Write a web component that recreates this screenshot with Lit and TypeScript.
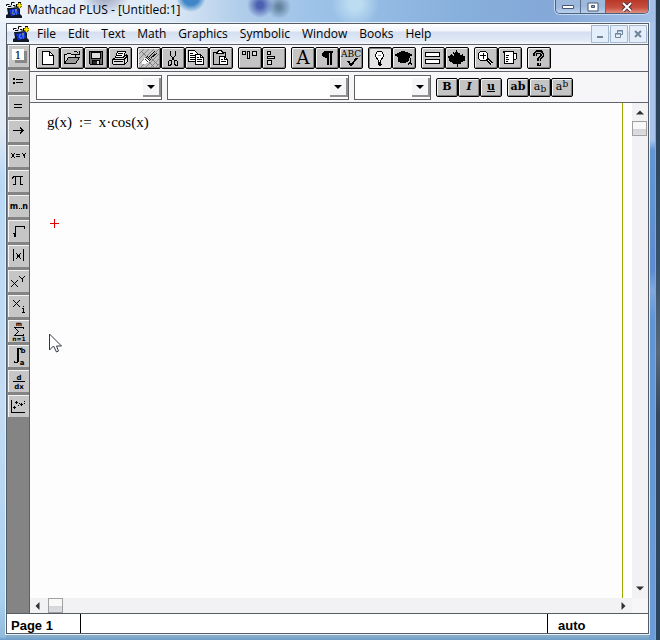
import { LitElement, html, css, svg, TemplateResult } from "lit";
import { customElement } from "lit/decorators.js";

type Tool = { label: string; icon: TemplateResult; pressed?: boolean };

const logo = html`<svg class="logo" viewBox="0 0 16 16" width="16" height="16" aria-hidden="true">
  <path d="M1 6h3l8-1 2 2v5l2 2v2H0v-3l2-1z" fill="#101828" />
  <path d="M3 8l9-2 1 6-8 2z" fill="#1230d8" />
  <path d="M6 9h2M9 10h2M7 12h2M10 12h1" stroke="#6aa0ff" />
  <path d="M9 8h2M6 11h1" stroke="#e6d200" />
  <path d="M.5 4V2.500h3M2 4.500h3v-1M5.500 3V.5h3M7 3.500h2v2" stroke="#000" fill="none" />
  <path d="M10 3.500h6M13.500 0v6" stroke="#000" stroke-width="3" />
  <path d="M11 3.500h5M13.500 1v5" stroke="#ffe800" stroke-width="2" />
</svg>`;

const toolGroups: Tool[][] = [
  [
    { label: "New", icon: svg`<path d="M5.500 3.500h7l4 4v9h-11z" fill="#fff"/><path d="M12.500 3.500v4h4"/>` },
    {
      label: "Open",
      icon: svg`<path d="M3.500 15.500v-9h2l1-1h3l1 1h4v3" fill="#d8d8d8"/><path d="M3.500 15.500l4-6h11l-4 6z" fill="#999"/><path d="M12.500 4.500l1-1h2l2 2M18.500 3v3.500H15"/>`,
    },
    {
      label: "Save",
      icon: svg`<path d="M4.500 3.500h13v13h-12l-1-1z" fill="#666"/><path d="M6.500 4h9v6h-9z" fill="#ddd"/><path d="M7.500 16v-4h7v4" fill="#222"/><path d="M12.500 13v3" stroke="#ddd" stroke-width="2"/>`,
    },
    {
      label: "Print",
      icon: svg`<path d="M6.500 9.500l2-6h8l-2 6z" fill="#fff"/><path d="M9 5.500h5M8 7.500h5"/><path d="M3.500 11.500l3-2h8l3-3 1 2v5l-3 3h-11l-1-1z" fill="#ddd"/><path d="M4 11.500h11v4M5 13.500h9M15 11.500l3-3" /><path d="M12 12.500h2" stroke="#fff"/>`,
    },
  ],
  [
    {
      label: "Clear",
      icon: svg`<path d="M1 6l5-5M1 11L11 1M1 16L16 1M3 19L21 1M8 19L21 6M13 19l8-8M18 19l3-3" stroke="#888"/><path d="M3 3l5 5M13 10l7 7M11 14l5 5" stroke="#777"/><path d="M11 9l6-6M13 10l6-5" stroke="#111"/><path d="M9 8l4 4M8 9l4 4" stroke="#111"/><path d="M4 15l3-5 4 3-4 3z" fill="#fff" stroke="#fff"/><path d="M7 11l3 3" stroke="#333"/>`,
    },
    {
      label: "Cut",
      icon: svg`<path d="M8.500 3v4l4 6M13.500 3v4l-4 6M10.500 9.500h1"/><path d="M6.500 13.500l1-1h2v3l-1 2h-2zM12.500 12.500h2l1 1v4h-2l-1-2z"/>`,
    },
    {
      label: "Copy",
      icon: svg`<path d="M2.500 2.500h6l3 3v8h-9z" fill="#fff"/><path d="M4 5.500h3M4 7.500h5M4 9.500h5M4 11.500h5"/><path d="M9.500 6.500h5l3 3v7h-8z" fill="#fff"/><path d="M14.500 6.500v3h3M11 9.500h2M11 11.500h5M11 13.500h5"/>`,
    },
    {
      label: "Paste",
      icon: svg`<path d="M3.500 4.500h12v12h-12z" fill="#bbb"/><path d="M6.500 5.500v-1l2-1v-1h3v1l2 1v1z" fill="#fff"/><path d="M9.500 8.500h5l3 3v5h-8z" fill="#fff"/><path d="M14.500 8.500v3h3M11 11.500h2M11 13.500h5"/>`,
    },
  ],
  [
    { label: "Align across", icon: svg`<path d="M3.500 3.500h3v3h-3zM8.500 3.500h2v7h-2zM13.500 3.500h4v4h-4z" fill="#ddd"/>` },
    { label: "Align down", icon: svg`<path d="M4.500 3.500h3v3h-3zM4.500 8.500h7v2h-7zM4.500 12.500h4v4h-4z" fill="#ddd"/>` },
  ],
  [
    { label: "Text region", icon: svg`<text class="serif" x="11" y="16" font-size="18">A</text>` },
    { label: "Paragraph", icon: svg`<path d="M8 3h9v1.500H8zM11 3h1.500v14H11zM14 3h1.500v14H14z" fill="#000" stroke="none"/><path d="M11 3c-7 0-7 7 0 7z" fill="#000" stroke="none"/>` },
    { label: "Check spelling", icon: svg`<text class="serif" x="11" y="9" font-size="9">ABC</text><path d="M8 13l3 4 6-7" stroke-width="2"/>` },
  ],
  [
    {
      label: "Tip",
      pressed: true,
      icon: svg`<path d="M9.500 14.500v-2l-3-4v-2l2-3h4l2 3v2l-3 4v2z" fill="#fff"/><path d="M9 15.500h3M10 17.500h2M9 16.500h4"/><path d="M9 7l1 1 1-1 1 1" stroke="#999"/>`,
    },
    {
      label: "Tutorial",
      icon: svg`<path d="M2 7l8-4 9 4-8 4z" fill="#000"/><path d="M5 9v4l5 2 5-2V9l-5 2z" fill="#000"/><path d="M12 8l5 2v6M16.500 14l-1 3M17.500 14l1 3"/>`,
    },
  ],
  [
    { label: "Formula", icon: svg`<path d="M3.500 4.500h14v4h-14zM3.500 11.500h14v4h-14z" fill="#fff"/>` },
    {
      label: "Evaluate",
      icon: svg`<path d="M10.500 2l2 3 2-1-1 4 3-2 1 2h2l-1 3 1 1-5 3 1 1-4 0v3h-1v-3H6l1-1-5-3 1-1-1-3h2l1-2 3 2-1-4 2 1z" fill="#000" stroke="none"/>`,
    },
  ],
  [
    {
      label: "Zoom",
      icon: svg`<circle cx="8" cy="8" r="5" fill="#fff"/><path d="M5 7.500h6M8.500 5v6"/><path d="M12 11l5 5" stroke-width="4"/><path d="M13 12l4 4" stroke="#fff"/>`,
    },
    {
      label: "Units",
      icon: svg`<path d="M4.500 3.500h10v2h3v5l-3 2v3h-9v-10z" fill="#fff"/><path d="M14.500 5v8M7 7.500h3M7 9.500h2M7 11.500h3M7 13.500h2"/>`,
    },
  ],
  [
    {
      label: "Help",
      icon: svg`<path d="M7 8V6l2-2h4l1 2v2l-3 3v2M11 14.500v3" stroke-width="4"/><path d="M7 8V6l2-2h3l2 2v2l-3 3v2M11 15v2" stroke="#aaa"/>`,
    },
  ],
];

const palette: Tool[] = [
  { label: "Arithmetic", icon: svg`<path d="M7 6h12v12H7z" fill="#888" stroke="none"/><path d="M4 4h12v11H4z" fill="#fff" stroke="none"/><text class="serif" x="10" y="14" font-size="11">1</text>` },
  { label: "Define", icon: svg`<path d="M5 9h2M5 13h2" stroke-width="2"/><path d="M8 9.500h7M8 12.500h7"/>` },
  { label: "Equals", icon: svg`<path d="M6 9.500h8M6 12.500h8"/>` },
  { label: "Arrow", icon: svg`<path d="M5 10.500h10M12 7.500l3 3-3 3"/>` },
  { label: "Boolean", icon: svg`<path d="M3 8l4 5M7 8l-4 5M8 9.500h4M8 11.500h4M14 8l2 2.500L18 8M16 10v3"/>` },
  { label: "Greek", icon: svg`<path d="M4 8.500l2-2h9M7.500 7v7l-2 1M12.500 7v7l2 1"/>` },
  { label: "Range", icon: svg`<text class="tiny" x="6" y="14" font-size="8">m</text><path d="M11 13.500h1M13 13.500h1"/><text class="tiny" x="17" y="14" font-size="8">n</text>` },
  { label: "Square root", icon: svg`<path d="M5 13.500h2M7 17V6.500h9v2M6.500 13v4"/>` },
  { label: "Absolute", icon: svg`<path d="M5.500 4v12M15.500 4v12M8 8l5 6M13 8l-5 6"/>` },
  { label: "Power", icon: svg`<path d="M3 10l7 7M10 10l-7 7M11 6l3 3 3-3M14 8v4"/>` },
  { label: "Subscript", icon: svg`<path d="M5 5l7 7M12 5l-7 7M15.500 11v1M14 13.500h1.500v4M14 17.500h3"/>` },
  { label: "Sum", icon: svg`<text class="tiny" x="11" y="6" font-size="6">m</text><path d="M15.500 9V7.500H6.500l4 4-4 4h9V14M7 8l4 4M7 15l4-4"/><text class="tiny" x="11" y="21" font-size="6">n=1</text>` },
  { label: "Integral", icon: svg`<path d="M12 5V3.500H9.500v14H6V16M10.500 4v13"/><text class="tiny" x="15" y="8" font-size="7">b</text><text class="tiny" x="14" y="20" font-size="7">a</text>` },
  { label: "Derivative", icon: svg`<text class="tiny" x="11" y="10" font-size="7">d</text><path d="M5 11.500h12"/><text class="tiny" x="11" y="19" font-size="7">dx</text>` },
  { label: "Graph", icon: svg`<path d="M3.500 5v13M3 17.500h14M8.500 6v3M7 7.500h3M5 12.500h3M6.500 11v3M10 10.500h1M12 9.500h3M13.500 8v3M16 6.500h1M11 8.500h1M16 8.500h1"/>` },
];

const formats: { label: string; cls: string; body: TemplateResult }[][] = [
  [
    { label: "Bold", cls: "", body: html`B` },
    { label: "Italic", cls: "italic", body: html`I` },
    { label: "Underline", cls: "under", body: html`u` },
  ],
  [
    { label: "Normal", cls: "", body: html`ab` },
    { label: "Subscript", cls: "light", body: html`a<sub>b</sub>` },
    { label: "Superscript", cls: "light", body: html`a<sup>b</sup>` },
  ],
];

const menus = ["File", "Edit", "Text", "Math", "Graphics", "Symbolic", "Window", "Books", "Help"];

@customElement("app-root")
export class AppRoot extends LitElement {
  static styles = css`
    :host {
      display: block;
      font-family: "Open Sans", "Noto Sans", sans-serif;
      font-size: 12px;
      color: #000;
    }
    * {
      box-sizing: border-box;
    }
    button {
      padding: 0;
      margin: 0;
      font: inherit;
      color: inherit;
      flex: none;
    }
    svg {
      display: block;
    }
    .desktop {
      min-height: 100vh;
      display: flex;
      padding-right: 4px;
      background: linear-gradient(#24384c, #34506a 40%, #56687a 55%, #34465c 65%, #2a4560);
    }
    .window {
      flex: 1;
      min-width: 0;
      display: flex;
      flex-direction: column;
      padding: 0 6px 5px 5px;
      border-right: 1px solid #20d0ff;
      background:
        linear-gradient(#a8c4ec 0 140px, #6496d4 150px, #5c8cd0 270px, #80a8dc 290px, #6094d4 320px, #6c9cd8) right / 6px 100% no-repeat,
        linear-gradient(transparent 60%, #6a9ccc 100%) bottom / 100% 8px no-repeat,
        linear-gradient(#eaf2fa, #dfeaf6 130px, #b8d8f4 180px, #c4dcf4 400px, #a8d0f0 600px, #90b8d8) left / 6px 100% no-repeat,
        #86acc8;
    }
    .titlebar {
      display: flex;
      align-items: flex-start;
      gap: 5px;
      height: 22px;
      margin: 0 -6px 0 -5px;
      padding: 2px 6px 0;
      background:
        radial-gradient(circle at 260px 5px, #4c60b0 0 3px, transparent 13px),
        radial-gradient(circle at 279px 7px, #6484a0 0 2px, transparent 12px),
        radial-gradient(circle at 191px -3px, #3f86c8 0 8px, transparent 15px),
        radial-gradient(circle at 105px -10px, #a8b0c8 0 10px, transparent 26px),
        radial-gradient(circle at 355px 4px, #bcdcf2 0 6px, transparent 24px),
        linear-gradient(90deg, #eef4fa, #dce8f6 170px, #b0cdea 240px, #9cc2e8 320px, #88b0dc 460px, #84a8d8 550px, #a4c0e8);
    }
    .title {
      flex: 1;
      margin: 0;
      font-size: 12px;
      font-weight: 400;
      line-height: 16px;
      white-space: nowrap;
    }
    .caption {
      display: flex;
      height: 14px;
      margin-top: -2px;
      border: 1px solid #4c6080;
      border-top: 0;
      border-radius: 0 0 5px 5px;
      overflow: hidden;
      box-shadow: 0 0 0 1px #c4d8f0;
    }
    .caption button {
      width: 25px;
      border: 0;
      border-right: 1px solid #5a6c88;
      background: linear-gradient(#9cb8dc 50%, #b8d0ec);
    }
    .caption .close {
      width: 42px;
      border-right: 0;
      background: linear-gradient(#b83828, #c85040 60%, #e09080);
    }
    .caption svg,
    .mdi svg {
      margin: auto;
    }
    .client {
      flex: 1;
      display: flex;
      flex-direction: column;
      border: 1px solid #545c68;
      outline: 1px solid #e8f0fa;
      background: #fff;
      margin: 1px 0 1px 1px;
    }
    .menubar {
      display: flex;
      align-items: center;
      height: 21px;
      padding: 0 1px 0 6px;
      border-bottom: 1px solid #60646c;
      background: linear-gradient(#fff, #f2f5fb 35%, #d4dff0 40%, #e0e8f5 80%, #f6f8fc);
    }
    .menubar nav {
      flex: 1;
      display: flex;
      padding-left: 2px;
    }
    .menubar nav button {
      padding: 0 6px;
      border: 0;
      background: none;
      line-height: 18px;
    }
    .mdi {
      display: flex;
      gap: 1px;
    }
    .mdi button {
      width: 18px;
      height: 18px;
      border: 1px solid #a4b8d0;
      background: #e4eefa;
    }
    .work {
      flex: 1;
      display: flex;
      border-bottom: 1px solid #545c64;
    }
    .palette {
      flex: none;
      display: flex;
      flex-direction: column;
      gap: 3px;
      width: 23px;
      padding: 0 1px;
      border-right: 1px solid #606060;
      background: #848484;
    }
    .palette button {
      width: 21px;
      height: 22px;
      border: solid;
      border-width: 1px 0 0 1px;
      border-color: #f4f4f4;
      background: #c6c6c6;
    }
    .main {
      flex: 1;
      min-width: 0;
      display: flex;
      flex-direction: column;
    }
    .bar {
      display: flex;
      align-items: center;
      gap: 5px;
      padding: 0 6px;
      border-bottom: 1px solid #60646c;
      background: #f6f6f8;
    }
    .tools {
      height: 27px;
    }
    .styles {
      height: 31px;
    }
    .group {
      display: flex;
    }
    .tool {
      width: 24px;
      height: 22px;
      border: 1px solid #000;
      border-radius: 2px;
      background: #c4c4c4;
      box-shadow: inset 1px 1px #f4f4f4, inset -1px -1px #808080;
    }
    .pressed {
      background: #e4e4e4;
      box-shadow: inset 1px 1px #808080;
    }
    .icon {
      fill: none;
      stroke: #000;
      shape-rendering: crispEdges;
    }
    .icon text {
      fill: #000;
      stroke: none;
      text-anchor: middle;
    }
    .serif {
      font-family: "DejaVu Serif", serif;
    }
    .tiny {
      font-family: "DejaVu Sans", sans-serif;
      font-weight: 700;
    }
    .combo {
      position: relative;
      height: 25px;
    }
    .combo select {
      appearance: none;
      width: 100%;
      height: 100%;
      border: 1px solid #606060;
      border-radius: 0;
      background: #fff;
    }
    .combo svg {
      position: absolute;
      right: 1px;
      top: 3px;
      pointer-events: none;
      background: #f6f6f8;
      border: solid;
      border-width: 0 2px 2px 0;
      border-color: #909090;
    }
    .style {
      width: 126px;
    }
    .font {
      width: 182px;
    }
    .size {
      width: 77px;
    }
    .format {
      width: 22px;
      height: 19px;
      border: 1px solid #000;
      border-radius: 2px;
      background: #c4c4c4;
      box-shadow: inset 1px 1px #f4f4f4, inset -1px -1px #808080;
      font: 700 11px/16px "DejaVu Serif", serif;
      overflow: hidden;
    }
    .italic {
      font-style: italic;
    }
    .under {
      text-decoration: underline;
    }
    .light {
      font-weight: 400;
    }
    sub,
    sup {
      font-size: 9px;
      line-height: 0;
    }
    sub {
      vertical-align: -2px;
    }
    sup {
      vertical-align: 3px;
    }
    .sheet {
      flex: 1;
      display: grid;
      grid-template-columns: 1fr 16px;
      grid-template-rows: 1fr 15px;
    }
    .page {
      position: relative;
      margin-right: 9px;
      border-right: 1px solid #98ac00;
      background: #fdfdfd;
    }
    .math {
      display: flex;
      gap: 7px;
      margin: 0;
      padding: 9px 17px;
      font: 15px/20px "Liberation Serif", serif;
    }
    .cross {
      position: absolute;
      left: 20px;
      top: 116px;
    }
    .pointer {
      position: absolute;
      left: 19px;
      top: 230px;
    }
    .vbar,
    .hbar {
      display: flex;
      align-items: center;
      background: #f2f2f5;
    }
    .vbar {
      flex-direction: column;
      padding: 7px 0;
    }
    .hbar {
      padding: 0 6px 0 5px;
    }
    .corner {
      background: #f6f6f8;
    }
    .track {
      flex: 1;
      align-self: stretch;
    }
    .track i {
      display: block;
      width: 15px;
      height: 15px;
      border: 1px solid #a0a0a0;
      background: linear-gradient(#f8f8f8 50%, #d4d6da 55%, #dcdee2);
    }
    .vbar .track {
      padding: 6px 0;
    }
    .hbar .track {
      padding: 0 8px;
    }
    .status {
      display: flex;
      height: 19px;
      background: #fff;
      font: 700 13px/23px "Liberation Sans", Arial, sans-serif;
    }
    .status span {
      padding-left: 4px;
    }
    .pageno {
      width: 74px;
      border-right: 1px solid #000;
    }
    .message {
      flex: 1;
    }
    .status .mode {
      width: 101px;
      padding-left: 10px;
      border-left: 1px solid #000;
    }
  `;

  private tool(t: Tool) {
    return html`<button class="tool ${t.pressed ? "pressed" : ""}" aria-label=${t.label}>
      <svg class="icon" width="22" height="20" viewBox="0 0 22 20">${t.icon}</svg>
    </button>`;
  }

  private combo(cls: string, label: string) {
    return html`<div class="combo ${cls}">
      <select aria-label=${label}><option></option></select>
      <svg width="18" height="19" viewBox="0 0 16 17"><path d="M4 7h8l-4 4z" /></svg>
    </div>`;
  }

  render() {
    return html`<div class="desktop">
      <div class="window">
        <header class="titlebar">
          ${logo}
          <h1 class="title">Mathcad PLUS - [Untitled:1]</h1>
          <div class="caption">
            <button aria-label="Minimize"><svg width="12" height="6"><path d="M.5 1.500h11v3H.5z" fill="#fff" stroke="#465670" /></svg></button>
            <button aria-label="Maximize"><svg width="12" height="10"><path d="M1 1h10v8H1z" fill="#fff" stroke="#465670" /><path d="M4.500 3.500h3v2h-3z" fill="#90a8c8" stroke="#465670" /></svg></button>
            <button class="close" aria-label="Close"><svg width="12" height="10"><path d="M2 1l8 8M10 1L2 9" stroke="#503038" stroke-width="4" /><path d="M2 1l8 8M10 1L2 9" stroke="#fff" stroke-width="2" /></svg></button>
          </div>
        </header>
        <div class="client">
          <div class="menubar">
            ${logo}
            <nav>${menus.map((m) => html`<button>${m}</button>`)}</nav>
            <div class="mdi">
              <button aria-label="Minimize document"><svg width="10" height="10"><path d="M2 8h6" stroke="#708498" stroke-width="2" /></svg></button>
              <button aria-label="Restore document"><svg width="10" height="10"><path d="M3.500 4V1.500h5v4H7M3 2h6M1.500 4.500h5v4h-5zM1 5h6" fill="none" stroke="#708498" /></svg></button>
              <button aria-label="Close document"><svg width="10" height="10"><path d="M2 2l6 6M8 2L2 8" stroke="#708498" stroke-width="2" /></svg></button>
            </div>
          </div>
          <div class="work">
            <aside class="palette">
              ${palette.map(
                (p) => html`<button aria-label=${p.label}><svg class="icon" width="20" height="21" viewBox="1 1 20 21">${p.icon}</svg></button>`
              )}
            </aside>
            <div class="main">
              <div class="bar tools">${toolGroups.map((g) => html`<div class="group">${g.map((t) => this.tool(t))}</div>`)}</div>
              <div class="bar styles">
                ${this.combo("style", "Style")} ${this.combo("font", "Font")} ${this.combo("size", "Size")}
                ${formats.map(
                  (g) => html`<div class="group">${g.map((f) => html`<button class="format ${f.cls}" aria-label=${f.label}>${f.body}</button>`)}</div>`
                )}
              </div>
              <div class="sheet">
                <main class="page">
                  <p class="math"><span>g(x)</span><span>:=</span><span>x·cos(x)</span></p>
                  <svg class="cross" width="9" height="9"><path d="M0 4.500h9M4.500 0v9" stroke="#e00000" /></svg>
                  <svg class="pointer" width="13" height="20"><path d="M.5 1v16l4-4 3 6 2-1-2-5h5z" fill="#fff" stroke="#303848" /></svg>
                </main>
                <div class="vbar">
                  <svg width="8" height="5"><path d="M0 4.500l4-4 4 4z" fill="#303030" /></svg>
                  <div class="track"><i></i></div>
                  <svg width="8" height="5"><path d="M0 .5l4 4 4-4z" fill="#303030" /></svg>
                </div>
                <div class="hbar">
                  <svg width="5" height="8"><path d="M4.500 0l-4 4 4 4z" fill="#303030" /></svg>
                  <div class="track"><i></i></div>
                  <svg width="5" height="8"><path d="M.5 0l4 4-4 4z" fill="#303030" /></svg>
                </div>
                <div class="corner"></div>
              </div>
            </div>
          </div>
          <footer class="status"><span class="pageno">Page 1</span><span class="message"></span><span class="mode">auto</span></footer>
        </div>
      </div>
    </div>`;
  }
}
